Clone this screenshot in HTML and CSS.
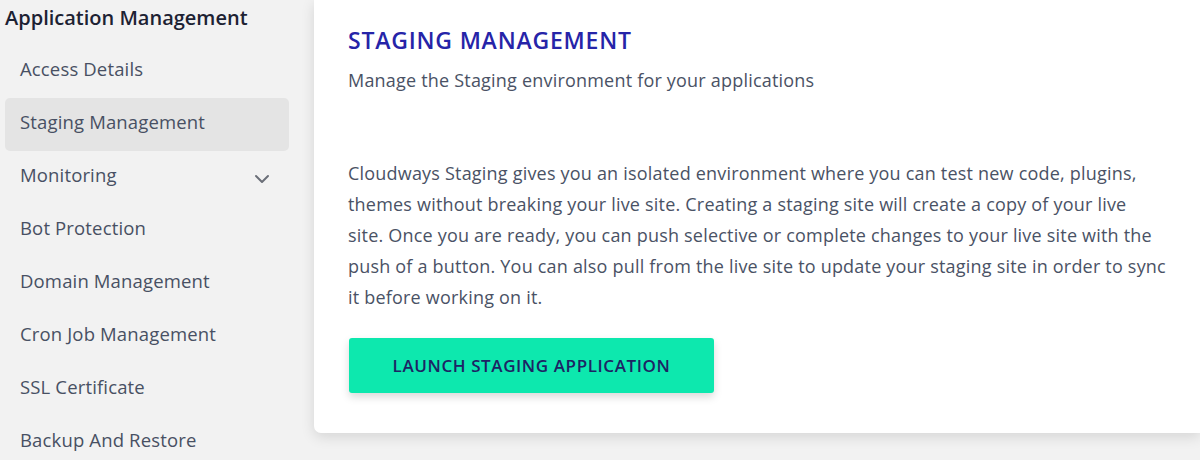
FILE: index.html
```html
<!DOCTYPE html>
<html lang="en">
<head>
<meta charset="utf-8">
<title>Staging Management</title>
<link rel="stylesheet" href="styles.css">
</head>
<body>
<div class="layout">
  <aside class="sidebar">
    <div class="side-title">Application Management</div>
    <ul class="menu">
      <li class="item">Access Details</li>
      <li class="item active">Staging Management</li>
      <li class="item has-sub">Monitoring
        <svg class="chev" width="16" height="10" viewBox="0 0 16 10"><path d="M2 2 L8 8 L14 2" fill="none" stroke="#6b6f78" stroke-width="2" stroke-linecap="round" stroke-linejoin="round"/></svg>
      </li>
      <li class="item">Bot Protection</li>
      <li class="item">Domain Management</li>
      <li class="item">Cron Job Management</li>
      <li class="item">SSL Certificate</li>
      <li class="item">Backup And Restore</li>
    </ul>
  </aside>
  <main class="card">
    <h1 class="title">STAGING MANAGEMENT</h1>
    <p class="subtitle">Manage the Staging environment for your applications</p>
    <p class="desc">Cloudways Staging gives you an isolated environment where you can test new code, plugins, themes without breaking your live site. Creating a staging site will create a copy of your live site. Once you are ready, you can push selective or complete changes to your live site with the push of a button. You can also pull from the live site to update your staging site in order to sync it before working on it.</p>
    <button class="launch">LAUNCH STAGING APPLICATION</button>
  </main>
</div>
</body>
</html>
```

FILE: styles.css
```css
html, body {
  margin: 0;
  padding: 0;
}
body {
  background: #f2f2f2;
  font-family: "Open Sans", "Liberation Sans", sans-serif;
  width: 1200px;
  height: 460px;
  overflow: hidden;
}
.layout {
  display: flex;
  align-items: flex-start;
}
.sidebar {
  width: 314px;
  flex: 0 0 314px;
}
.side-title {
  height: 45px;
  box-sizing: border-box;
  padding: 5px 0 0 5px;
  font-size: 20px;
  line-height: 26px;
  font-weight: 600;
  color: #1d2233;
}
.menu {
  list-style: none;
  margin: 0;
  padding: 0 0 0 5px;
  width: 284px;
}
.item {
  height: 53px;
  box-sizing: border-box;
  display: flex;
  align-items: center;
  justify-content: space-between;
  padding: 0 19px 6px 15px;
  font-size: 18.5px;
  letter-spacing: 0.15px;
  color: #485063;
  border-radius: 5px;
}
.item.active {
  background: #e4e4e4;
}
.chev {
  display: block;
  margin-top: 8px;
}
.card {
  flex: 1;
  height: 433px;
  box-sizing: border-box;
  background: #ffffff;
  border-bottom-left-radius: 7px;
  box-shadow: 0 4px 14px rgba(0, 0, 0, 0.12);
  padding: 25px 34px 0 34px;
}
.title {
  margin: 0;
  font-size: 23px;
  line-height: 30px;
  font-weight: 600;
  letter-spacing: 0.8px;
  color: #2624a8;
}
.subtitle {
  margin: 12px 0 0 0;
  font-size: 18px;
  letter-spacing: 0.2px;
  line-height: 26px;
  color: #4a5265;
}
.desc {
  margin: 65px 0 0 0;
  font-size: 18px;
  letter-spacing: 0.2px;
  line-height: 31px;
  color: #4a5265;
  max-width: 822px;
}
.launch {
  margin: 25px 0 0 1px;
  width: 365px;
  height: 55px;
  border: none;
  border-radius: 3px;
  background: #0de8ae;
  color: #1d2464;
  font-family: inherit;
  font-size: 17px;
  letter-spacing: 0.6px;
  font-weight: 600;
  box-shadow: 0 4px 8px rgba(0, 0, 0, 0.15);
  cursor: pointer;
}
```
